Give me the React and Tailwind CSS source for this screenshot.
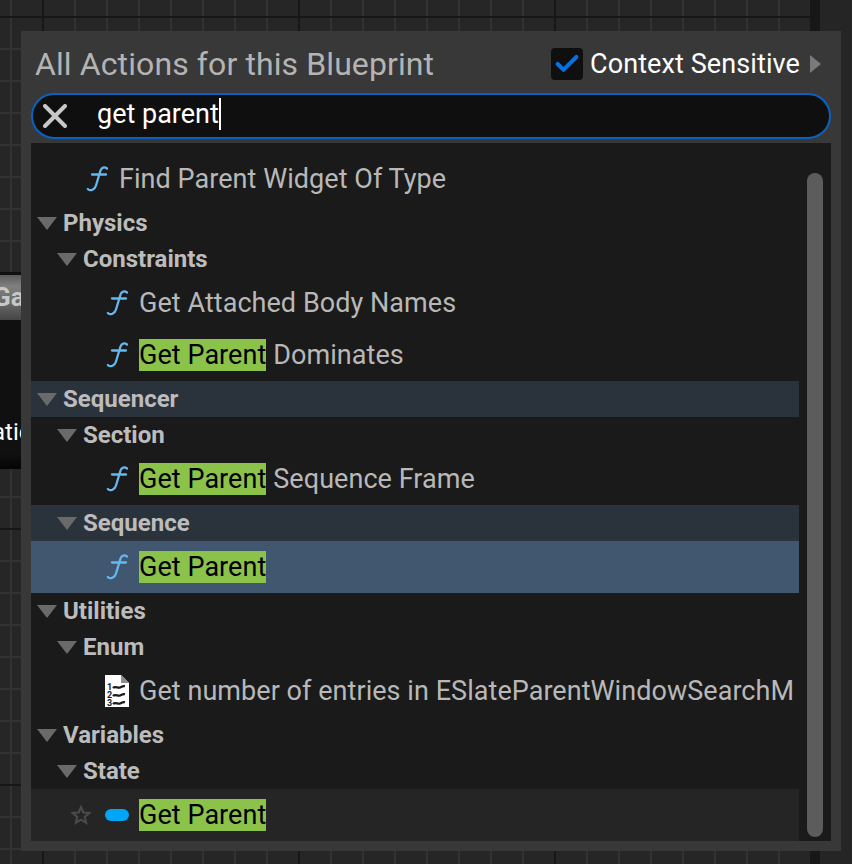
import { Check } from "lucide-react";

const FONT = "font-['Roboto',sans-serif]";

function Caret({ depth }) {
  return (
    <span className={depth === 0 ? "ml-[6px] mr-[6px] w-[20px] shrink-0" : "ml-[26px] mr-[6px] w-[20px] shrink-0"}>
      <svg width="20" height="13" viewBox="0 0 20 13" className="block">
        <path d="M0 0 L20 0 L10 13 Z" fill="#6a6a6a" />
      </svg>
    </span>
  );
}

function FunctionIcon() {
  return (
    <svg width="24" height="28" viewBox="0 0 24 28" className="block shrink-0">
      <path
        d="M22 3.5 C19.5 1.6 16.5 2.2 15.5 5.5 L11 20.5 C9.8 24.8 5.5 26.5 2.8 24 M7 9.5 L21 9.5"
        fill="none"
        stroke="#63b8f0"
        strokeWidth="2.3"
        strokeLinecap="round"
      />
    </svg>
  );
}

function EnumIcon() {
  return (
    <svg width="24" height="32" viewBox="0 0 24 32" className="block shrink-0">
      <path d="M0 0 H16 L24 8 V32 H0 Z" fill="#ffffff" />
      <path d="M16 0 L24 8 H16 Z" fill="#8e8e8e" />
      <g fill="#1a1a1a" fontSize="9" fontWeight="700" fontFamily="Roboto, sans-serif">
        <text x="2" y="15">1</text>
        <text x="2" y="23">2</text>
        <text x="2" y="31">3</text>
      </g>
      <g fill="none" stroke="#1a1a1a" strokeWidth="2.2">
        <path d="M8 13 C10 10.5 13 13.5 15 12.5 C17 11.5 18 10.8 20 11.2" />
        <path d="M8 21 C10 18.5 13 21.5 15 20.5 C17 19.5 18 18.8 20 19.2" />
        <path d="M8 29 C10 26.5 13 29.5 15 28.5 C17 27.5 18 26.8 20 27.2" />
      </g>
    </svg>
  );
}

function Match() {
  return <span className="flex h-[32px] items-center bg-[#8bc24a] text-black">Get Parent</span>;
}

function Category({ label, depth = 0, tint }) {
  return (
    <div className={`flex h-[36px] items-center text-[24px] font-bold text-[#bcbcbc] ${tint ? "bg-[#2a323c]" : ""}`}>
      <Caret depth={depth} />
      <span>{label}</span>
    </div>
  );
}

function Action({ icon = <FunctionIcon />, indent = "pl-[74px]", children, className = "" }) {
  return (
    <div className={`flex h-[52px] items-center text-[27px] tracking-[0.05px] text-[#b8b8b8] ${indent} ${className}`}>
      <span className="flex w-[34px] shrink-0">{icon}</span>
      <span className="flex items-center whitespace-nowrap">{children}</span>
    </div>
  );
}

export default function App() {
  return (
    <div className={`${FONT} relative h-[864px] w-[852px] overflow-hidden bg-[#262626] bg-[linear-gradient(to_right,#171717_2px,transparent_2px),linear-gradient(to_bottom,#171717_2px,transparent_2px),linear-gradient(to_right,#323232_2px,transparent_2px),linear-gradient(to_bottom,#323232_2px,transparent_2px)] bg-[size:256px_256px,256px_256px,32px_32px,32px_32px] bg-[position:42px_16px]`}>
      {/* graph behind the menu */}
      <div className="absolute left-0 top-[272px] h-[197px] w-[21px] overflow-hidden bg-[linear-gradient(to_bottom,#0f100f_92%,#050505)]">
        <div className="mt-[3px] flex h-[45px] items-center overflow-hidden bg-[linear-gradient(to_bottom,#5a5a5a,#808080_25%,#6a6a6a_60%,#454545)] text-[26px] font-bold text-[#c8c8c8]">
          <span className="-ml-[7px]">Ga</span>
        </div>
        <div className="absolute -left-[8px] top-[142px] text-[24px] text-white">atic</div>
      </div>
      <div className="absolute bottom-0 left-[810px] top-0 w-[10px] bg-[#171717]" />
      <div className="absolute bottom-0 left-[820px] right-0 top-0 bg-[#252525]" />

      {/* menu */}
      <div className="absolute left-[21px] top-[31px] flex h-[820px] w-[820px] flex-col bg-[#383838] p-[10px] pt-0">
        <div className="flex h-[62px] items-center justify-between pl-[4px] pr-[10px] pt-[4px]">
          <span className="text-[32px] tracking-[0.1px] text-[#b4b4b4]">All Actions for this Blueprint</span>
          <div className="flex items-center">
            <span className="flex h-[32px] w-[32px] items-center justify-center rounded-[4px] bg-[#0f0f0f]">
              <Check size={28} strokeWidth={3.5} className="text-[#0a70e0]" />
            </span>
            <span className="ml-[7px] text-[27px] tracking-[0.1px] text-white">Context Sensitive</span>
            <svg width="11" height="18" viewBox="0 0 11 18" className="ml-[10px] block">
              <path d="M0 0 L11 9 L0 18 Z" fill="#7a7a7a" />
            </svg>
          </div>
        </div>
        <div className="flex h-[46px] items-center rounded-full border-2 border-[#0a62c0] bg-[#0f0f0f] pl-[10px] text-[27px] text-white">
          <svg width="24" height="24" viewBox="0 0 24 24" className="block shrink-0">
            <path d="M2 2 L22 22 M22 2 L2 22" fill="none" stroke="#c8c8c8" strokeWidth="4" strokeLinecap="round" />
          </svg>
          <span className="mb-[4px] ml-[30px] border-r-2 border-white leading-[32px]">get parent</span>
        </div>
        <div className="mt-[4px] flex min-h-0 flex-1 bg-[#1a1a1a]">
          <div className="w-[768px] pt-[10px]">
            <Action indent="pl-[54px]">Find Parent Widget Of Type</Action>
            <Category label="Physics" />
            <Category label="Constraints" depth={1} />
            <Action>Get Attached Body Names</Action>
            <Action>
              <Match />
              <span className="ml-[7px]">Dominates</span>
            </Action>
            <Category label="Sequencer" tint />
            <Category label="Section" depth={1} />
            <Action>
              <Match />
              <span className="ml-[7px]">Sequence Frame</span>
            </Action>
            <Category label="Sequence" depth={1} tint />
            <Action className="bg-[#41566f]">
              <Match />
            </Action>
            <Category label="Utilities" />
            <Category label="Enum" depth={1} />
            <Action icon={<EnumIcon />}>Get number of entries in ESlateParentWindowSearchM</Action>
            <Category label="Variables" />
            <Category label="State" depth={1} />
            <div className="flex h-[52px] items-center bg-[#252525] text-[27px] tracking-[0.05px]">
              <svg width="20" height="20" viewBox="0 0 24 24" className="ml-[40px] block shrink-0">
                <path
                  d="M12 2.5 L14.8 9 L22 9.6 L16.5 14.3 L18.2 21.3 L12 17.6 L5.8 21.3 L7.5 14.3 L2 9.6 L9.2 9 Z"
                  fill="none"
                  stroke="#4a4a4a"
                  strokeWidth="2.6"
                />
              </svg>
              <span className="ml-[14px] h-[12px] w-[24px] shrink-0 rounded-full bg-[#00a6f5]" />
              <span className="ml-[10px]">
                <Match />
              </span>
            </div>
          </div>
          <div className="ml-[8px] mt-[30px] mb-[4px] w-[16px] rounded-full bg-[#5c5c5c]" />
        </div>
      </div>
    </div>
  );
}
